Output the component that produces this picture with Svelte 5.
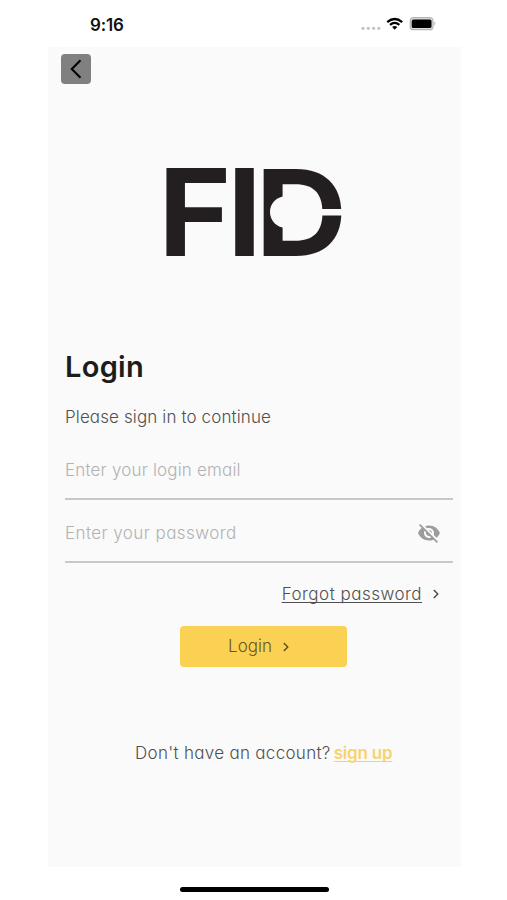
<script lang="ts">
  let email = $state("");
  let password = $state("");
  let hidden = $state(true);
</script>

<div class="phone">
  <header class="status">
    <span class="time">9:16</span>
    <svg class="signals" width="78" height="18" viewBox="0 0 78 18" aria-hidden="true">
      <g fill="#c4c4c4">
        <circle cx="3" cy="13.3" r="1.6" />
        <circle cx="8.3" cy="13.3" r="1.6" />
        <circle cx="13.6" cy="13.3" r="1.6" />
        <circle cx="18.8" cy="13.3" r="1.6" />
      </g>
      <g fill="none" stroke="#000" stroke-width="2.2">
        <path d="M27.2 7.1 Q34.7 .9 42.2 7.1" />
        <path d="M30 9.9 Q34.7 6 39.4 9.9" />
      </g>
      <path d="M34.7 14.7 L32.1 12.1 Q34.7 10.1 37.3 12.1 Z" />
      <rect x="50.2" y="2.7" width="22.8" height="12" rx="3.3" fill="#ddd" stroke="#b5b5b5" stroke-width="1.2" />
      <rect x="51.7" y="4.4" width="19.8" height="8.6" rx="1.6" />
      <path d="M74.3 6.5 Q76.6 8.5 74.3 10.6 Z" fill="#b5b5b5" />
    </svg>
  </header>

  <main>
    <button class="back" aria-label="Back">
      <svg width="30" height="30" viewBox="0 0 30 30">
        <path d="M19.5 6.3 L10.8 15 L19.5 23.7" fill="none" stroke="#000" stroke-width="2.1" />
      </svg>
    </button>

    <svg class="logo" width="180" height="92" viewBox="164 166 180 92" aria-label="FID">
      <g class="letters">
        <text x="158.3" y="256" textLength="73" lengthAdjust="spacingAndGlyphs">F</text>
        <text x="227" y="256" textLength="35" lengthAdjust="spacingAndGlyphs">I</text>
        <text class="round" x="255.2" y="255.5" textLength="92" lengthAdjust="spacingAndGlyphs">D</text>
      </g>
      <circle cx="285.8" cy="212" r="15.8" fill="#fafafa" />
      <rect x="318" y="209" width="26" height="6.5" fill="#fafafa" />
    </svg>

    <h1>Login</h1>
    <p class="lead">Please sign in to continue</p>

    <div class="field">
      <input class="email" type="email" bind:value={email} placeholder="Enter your login email" />
    </div>
    <div class="field">
      <input class="password" type={hidden ? "password" : "text"} bind:value={password} placeholder="Enter your password" />
      <button class="eye" aria-label="Show password" onclick={() => (hidden = !hidden)}>
        <svg width="24" height="24" viewBox="0 0 24 24" fill="#9c9c9c">
          <path d="M12 7c2.76 0 5 2.24 5 5 0 .65-.13 1.26-.36 1.83l2.92 2.92c1.51-1.26 2.7-2.89 3.43-4.75-1.73-4.39-6-7.5-11-7.5-1.4 0-2.74.25-3.98.7l2.16 2.16C10.74 7.13 11.35 7 12 7zM2 4.27l2.28 2.28.46.46C3.08 8.3 1.78 10.02 1 12c1.73 4.39 6 7.5 11 7.5 1.55 0 3.03-.3 4.38-.84l.42.42L19.73 22 21 20.73 3.27 3 2 4.27zM7.53 9.8l1.55 1.55c-.05.21-.08.43-.08.65 0 1.66 1.34 3 3 3 .22 0 .44-.03.65-.08l1.55 1.55c-.67.33-1.41.53-2.2.53-2.76 0-5-2.24-5-5 0-.79.2-1.53.53-2.2zm4.31-.78l3.15 3.15.02-.16c0-1.66-1.34-3-3-3l-.17.01z" />
        </svg>
      </button>
    </div>

    <div class="forgot">
      <span class="link">Forgot password</span>
      <svg width="6" height="10" viewBox="0 0 6 10"><path d="M.8 1 L4.8 5 L.8 9" /></svg>
    </div>

    <button class="submit">
      <span>Login</span>
      <svg width="6" height="10" viewBox="0 0 6 10"><path d="M.8 1 L4.8 5 L.8 9" /></svg>
    </button>

    <p class="signup"><span>Don't have an account?</span><b>sign up</b></p>
  </main>

  <footer><div class="home"></div></footer>
</div>

<style>
  :global(body) {
    background: #fff;
  }
  .phone {
    height: 900px;
    display: flex;
    flex-direction: column;
    font-family: Inter, "Liberation Sans", sans-serif;
    font-feature-settings: "cv11";
    font-weight: 300;
    font-size: 17px;
    color: #505050;
  }
  .status {
    height: 47px;
    display: flex;
    align-items: flex-start;
    justify-content: space-between;
    padding: 15px 69px 0 90px;
    box-sizing: border-box;
  }
  .time {
    font-size: 17px;
    line-height: 20px;
    font-weight: 600;
    letter-spacing: -0.2px;
    color: #111;
  }
  main {
    width: 413px;
    height: 820px;
    margin-left: 48px;
    padding: 7px 8px 0 17px;
    box-sizing: border-box;
    display: flex;
    flex-direction: column;
    background: #fafafa;
  }
  button {
    padding: 0;
    border: none;
    background: none;
    color: inherit;
    font: inherit;
    font-feature-settings: inherit;
    cursor: pointer;
  }
  svg {
    display: block;
    flex: none;
  }
  .back {
    width: 30px;
    height: 30px;
    margin-left: -4px;
    border-radius: 4px;
    background: #808080;
  }
  .logo {
    margin: 82px 0 0 99px;
    overflow: visible;
  }
  .letters {
    fill: #231f20;
    font-size: 121px;
    font-weight: 700;
  }
  .round {
    font-size: 119px;
    font-weight: 650;
  }
  h1 {
    margin: 91px 0 0;
    font-size: 29px;
    line-height: 36px;
    font-weight: 600;
    letter-spacing: 0.3px;
    color: #1c1c1c;
  }
  p {
    margin: 0;
    line-height: 22px;
    white-space: nowrap;
  }
  .lead {
    margin-top: 21px;
    letter-spacing: 0.12px;
  }
  .field {
    height: 63px;
    width: 388px;
    display: flex;
    align-items: center;
    box-sizing: border-box;
    padding-top: 5px;
    border-bottom: 2px solid #c8c8c8;
  }
  .lead + .field {
    height: 61px;
    margin-top: 11px;
    padding-top: 2px;
  }
  input {
    flex: 1;
    min-width: 0;
    height: 24px;
    padding: 0;
    border: none;
    outline: none;
    background: transparent;
    color: inherit;
    font: inherit;
    font-feature-settings: inherit;
    letter-spacing: 0.18px;
  }
  .password {
    letter-spacing: 0.42px;
  }
  input::placeholder {
    color: #b2b2b2;
    opacity: 1;
  }
  .eye {
    margin-right: 12px;
  }
  .forgot {
    display: flex;
    justify-content: flex-end;
    align-items: center;
    gap: 11px;
    height: 24px;
    margin: 19px 14px 0 0;
  }
  .link {
    letter-spacing: 0.48px;
    text-decoration: underline;
    text-decoration-skip-ink: none;
    text-underline-offset: 2px;
    text-decoration-thickness: 1px;
  }
  .forgot path,
  .submit path {
    fill: none;
    stroke: #484848;
    stroke-width: 1.4;
  }
  .submit {
    width: 167px;
    height: 41px;
    margin: 20px 0 0 115px;
    padding-right: 10px;
    display: flex;
    align-items: center;
    justify-content: center;
    gap: 11px;
    border-radius: 4px;
    background: #fbd153;
    color: #6b561e;
  }
  .submit span {
    margin-top: -1px;
  }
  .submit path {
    stroke: #604c16;
  }
  .signup {
    display: flex;
    gap: 3px;
    margin: 75px 0 0 70px;
    letter-spacing: 0.3px;
  }
  .signup b {
    font-weight: 600;
    letter-spacing: -0.2px;
    color: #f7d36d;
    text-decoration: underline;
    text-decoration-skip-ink: none;
    text-decoration-thickness: 1px;
    text-underline-offset: 2px;
  }
  footer {
    flex: 1;
    display: flex;
    justify-content: center;
    align-items: flex-start;
    padding: 20px 0 0 1px;
  }
  .home {
    width: 149px;
    height: 5px;
    border-radius: 3px;
    background: #000;
  }
</style>
